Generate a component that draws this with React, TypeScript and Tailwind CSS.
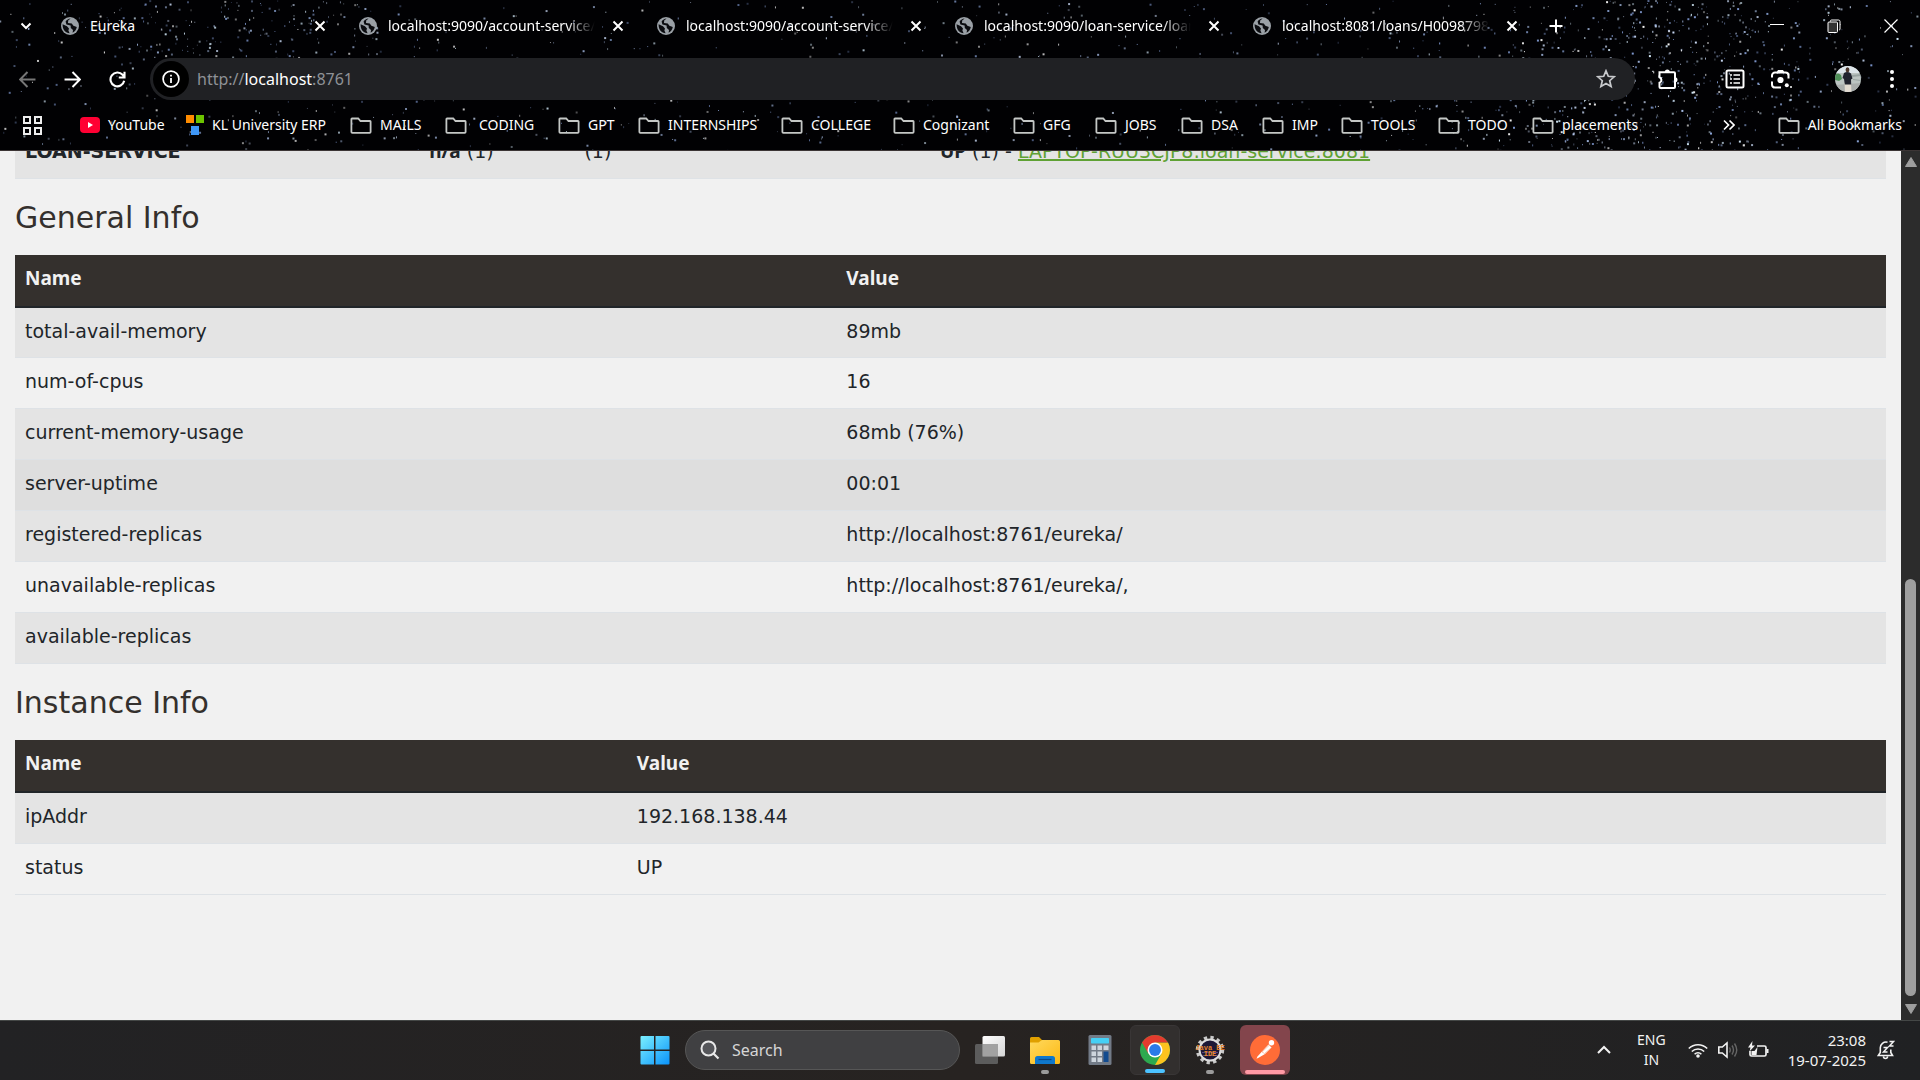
import type { ReactNode } from "react";

/* ---------- star field behind the browser frame ---------- */

type Star = { x: number; y: number; w: number; h: number; c: string; o: number };

function makeStars(): Star[] {
  let seed = 4211;
  const rnd = () => {
    seed = (seed * 1664525 + 1013904223) % 4294967296;
    return seed / 4294967296;
  };
  const colours = ["#ffffff", "#c9d9f5", "#8fa9dc", "#7f98cf", "#a9bfe8", "#d8efff"];
  const stars: Star[] = [];
  const add = (x: number, y: number, bright: number) => {
    const big = rnd() < 0.4;
    stars.push({
      x,
      y,
      w: big ? 2 : 1,
      h: big || rnd() < 0.5 ? 2 : 1,
      c: colours[Math.floor(rnd() * colours.length)],
      o: bright * (0.35 + rnd() * 0.65),
    });
  };
  for (let i = 0; i < 900; i++) add(rnd() * 100, rnd() * 150, 0.8);
  for (let i = 0; i < 640; i++) {
    const y = rnd() * 150;
    const spread = rnd() + rnd() + rnd() - 1.5;
    add(88 - y * 0.025 + spread * 11, y, 1);
  }
  for (let i = 0; i < 150; i++) add(12 + (rnd() + rnd() - 1) * 9, rnd() * 60, 0.9);
  return stars;
}

const STARS = makeStars();

function StarField() {
  return (
    <svg className="pointer-events-none absolute inset-0 h-full w-full" aria-hidden="true">
      {STARS.map((s, i) => (
        <rect key={i} x={`${s.x}%`} y={s.y} width={s.w} height={s.h} fill={s.c} opacity={s.o} />
      ))}
    </svg>
  );
}

/* ---------- small icons ---------- */

function Globe() {
  return (
    <svg viewBox="0 0 20 20" className="h-5 w-5 shrink-0" aria-hidden="true">
      <circle cx="10" cy="10" r="9" fill="#9aa0a6" />
      <path
        d="M2.6 8.2 7 10.2 9 12.4 8.4 14.6 9.6 17.2C5.6 17 2.4 13.6 2.6 8.2ZM10.6 2.6 8.2 4.6 8 7 11.8 7.4 13.4 9.8 16.8 11C16.4 13.6 14.8 15.8 12.6 16.8L13 14 10.8 12 10.6 9.6 6.4 8.4 5.6 5.6C6.8 3.8 8.6 2.8 10.6 2.6Z"
        fill="#0b0c10"
      />
    </svg>
  );
}

function Close() {
  return (
    <svg viewBox="0 0 12 12" className="h-3 w-3" aria-hidden="true">
      <path d="M1.5 1.5l9 9M10.5 1.5l-9 9" stroke="#fff" strokeWidth="2" />
    </svg>
  );
}

function Folder() {
  return (
    <svg viewBox="0 0 22 20" className="h-5 w-[22px] shrink-0" aria-hidden="true">
      <path
        d="M2 3.5h6.2l2.3 2.5H20a.6.6 0 0 1 .6.6V17a.9.9 0 0 1-.9.9H2.3a.9.9 0 0 1-.9-.9V4.1a.6.6 0 0 1 .6-.6z"
        fill="none"
        stroke="#c4c7c5"
        strokeWidth="1.8"
      />
    </svg>
  );
}

function YouTube() {
  return (
    <svg viewBox="0 0 20 18" className="h-[18px] w-5 shrink-0" aria-hidden="true">
      <rect y="1" width="20" height="16" rx="4" fill="#ff0033" />
      <path d="M8 6v6l5-3z" fill="#fff" />
    </svg>
  );
}

function Squares() {
  return (
    <svg viewBox="0 0 18 22" className="h-[22px] w-[18px] shrink-0" aria-hidden="true">
      <path d="M0 1h8v8H0z" fill="#ff8c00" />
      <path d="M10 1h8v8h-8z" fill="#6cc400" />
      <path d="M5 12h8v9H5z" fill="#3f97f6" />
    </svg>
  );
}

/* ---------- browser frame ---------- */

const tabs = [
  "Eureka",
  "localhost:9090/account-service/",
  "localhost:9090/account-service/",
  "localhost:9090/loan-service/loan",
  "localhost:8081/loans/H00987981",
];

function TabStrip() {
  return (
    <div className="relative flex h-[50px] items-center pt-px">
      <button aria-label="Search tabs" className="flex w-[60px] shrink-0 justify-center pr-2">
        <svg viewBox="0 0 12 12" className="h-3 w-3" aria-hidden="true">
          <path d="M1.5 3.5 6 8l4.5-4.5" fill="none" stroke="#fff" strokeWidth="2" />
        </svg>
      </button>
      <div role="tablist" className="flex min-w-0">
        {tabs.map((t, i) => (
          <div key={i} className="flex w-[298px] min-w-0 items-center">
            <div role="tab" aria-selected={i === 0} className="flex min-w-0 items-center gap-[10px]">
              <Globe />
              <span
                className="w-[207px] overflow-hidden text-sm whitespace-nowrap text-white"
                style={i ? { maskImage: "linear-gradient(90deg,#000 86%,transparent)" } : undefined}
              >
                {t}
              </span>
            </div>
            <button aria-label={`Close ${t}`} className="ml-4 p-px">
              <Close />
            </button>
          </div>
        ))}
      </div>
      <button aria-label="New tab" className="-ml-px">
        <svg viewBox="0 0 14 14" className="h-[14px] w-[14px]" aria-hidden="true">
          <path d="M7 .5v13M.5 7h13" stroke="#fff" strokeWidth="2" />
        </svg>
      </button>
      <div className="ml-auto flex items-center gap-[43px] pr-[22px]">
        <button aria-label="Minimize">
          <svg viewBox="0 0 14 14" className="h-[14px] w-[14px]" aria-hidden="true">
            <path d="M0 5.5h14" stroke="#fff" strokeWidth="1" />
          </svg>
        </button>
        <button aria-label="Restore">
          <svg viewBox="0 0 14 14" className="h-[14px] w-[14px]" aria-hidden="true">
            <path d="M3.5 2.5v-.5a1 1 0 0 1 1-1h7a1.500 1.500 0 0 1 1.500 1.500v7.500a1 1 0 0 1-1 1" fill="none" stroke="#fff" />
            <rect x="1" y="3" width="9.500" height="10.500" rx="1" fill="#333" stroke="#fff" />
          </svg>
        </button>
        <button aria-label="Close window">
          <svg viewBox="0 0 14 14" className="h-[14px] w-[14px]" aria-hidden="true">
            <path d="M.5.5l13 13M13.500.5l-13 13" stroke="#fff" strokeWidth="1.2" />
          </svg>
        </button>
      </div>
    </div>
  );
}

function Toolbar() {
  return (
    <div className="relative flex h-[58px] items-center">
      <div className="flex w-[150px] shrink-0 items-center gap-7 pl-[19px]">
        <button aria-label="Back">
          <svg viewBox="0 0 16 16" className="h-[17px] w-[17px]" aria-hidden="true">
            <path d="M15.500 8H1.500M8 1 1 8l7 7" fill="none" stroke="#777" strokeWidth="1.900" />
          </svg>
        </button>
        <button aria-label="Forward">
          <svg viewBox="0 0 16 16" className="h-[17px] w-[17px]" aria-hidden="true">
            <path d="M.5 8h14M8 1l7 7-7 7" fill="none" stroke="#fff" strokeWidth="1.900" />
          </svg>
        </button>
        <button aria-label="Reload">
          <svg viewBox="0 0 16 16" className="h-[17px] w-[17px]" aria-hidden="true">
            <path d="M14.300 9.200A6.500 6.500 0 1 1 12.800 3.600L14.500 5.600M14.600.6v5.500H9.200" fill="none" stroke="#fff" strokeWidth="2" />
          </svg>
        </button>
      </div>
      <div className="flex h-[42px] min-w-0 grow items-center rounded-full bg-[#202124] pr-[19px] pl-[3px]">
        <button
          aria-label="View site information"
          className="flex h-9 w-9 shrink-0 items-center justify-center rounded-full bg-black"
        >
          <svg viewBox="0 0 18 18" className="h-[18px] w-[18px]" aria-hidden="true">
            <circle cx="9" cy="9" r="7.900" fill="none" stroke="#fff" strokeWidth="1.700" />
            <path d="M9 8v5M9 4.800v1.800" stroke="#fff" strokeWidth="1.800" />
          </svg>
        </button>
        <a href="http://localhost:8761" className="ml-2 grow text-base text-[#8e9196]">
          http://<span className="text-white">localhost</span>:8761
        </a>
        <button aria-label="Bookmark this tab">
          <svg viewBox="0 0 20 20" className="h-5 w-5" aria-hidden="true">
            <path
              d="M10 1.800l2.300 5.500 5.900.5-4.500 3.900 1.400 5.800L10 14.400l-5.100 3.100 1.400-5.800L1.800 7.800l5.900-.5z"
              fill="none"
              stroke="#c7c9cc"
              strokeWidth="1.700"
            />
          </svg>
        </button>
      </div>
      <div className="flex w-[285px] shrink-0 items-center pl-[22px]">
        <button aria-label="Extensions" className="mr-[46px]">
          <svg viewBox="0 0 22 22" className="h-[22px] w-[22px]" aria-hidden="true">
            <path
              d="M2.500 4.200H17a1 1 0 0 1 1 1V19a1 1 0 0 1-1 1H3.500a1 1 0 0 1-1-1v-4.200a3 3 0 0 0 0-5.600z"
              fill="none"
              stroke="#fff"
              strokeWidth="2"
            />
            <path d="M7.800 4a2.500 2.500 0 0 1 5 0zM18 9.300a2.500 2.500 0 0 1 0 5z" fill="#fff" />
          </svg>
        </button>
        <button aria-label="Reading list" className="mr-[25px]">
          <svg viewBox="0 0 20 20" className="h-5 w-5" aria-hidden="true">
            <rect x="1.500" y="1.500" width="17" height="17" rx="1.500" fill="none" stroke="#fff" strokeWidth="2" />
            <path d="M5 6h2M5 10h2M5 14h2M8.500 6H15M8.500 10H15M8.500 14H15" stroke="#fff" strokeWidth="1.700" />
          </svg>
        </button>
        <button aria-label="Search with Lens" className="mr-[43px]">
          <svg viewBox="0 0 22 22" className="h-[22px] w-[22px]" aria-hidden="true">
            <path
              d="M2 9.500V7.500a3 3 0 0 1 3-3h10.500a3 3 0 0 1 3 3v3M2 13.500v3a3 3 0 0 0 3 3h6"
              fill="none"
              stroke="#fff"
              strokeWidth="2"
            />
            <path d="M6.500 4.500 8 2h5l1.500 2.500z" fill="#fff" />
            <circle cx="10.500" cy="12" r="3.100" fill="#fff" />
            <circle cx="16.800" cy="17.300" r="2" fill="#fff" />
            <circle cx="21" cy="19" r="1" fill="#fff" />
          </svg>
        </button>
        <button aria-label="Profile" className="mr-7">
          <svg viewBox="0 0 26 26" className="h-[26px] w-[26px]" aria-hidden="true">
            <clipPath id="avatar">
              <circle cx="13" cy="13" r="13" />
            </clipPath>
            <g clipPath="url(#avatar)">
              <path d="M0 0h26v26H0z" fill="#bcc4c2" />
              <path d="M0 0h26v7H0z" fill="#dde5ea" />
              <path d="M0 9q3-3 6 0l1 4-3 2-4-1z" fill="#4f8f58" />
              <path d="M17 9l9-1v2l-9 1zM18 13l8 1v1l-8-1z" fill="#98a3a1" />
              <path d="M0 19l26-2v9H0z" fill="#a9adac" />
              <path d="M9.500 17h6.500l.5 9h-6.500z" fill="#e3dcd2" />
              <path d="M9 7q3.500-2 7 .5l1.500 5-1.500 1 .2 5H9.800L9 13l-1.500-1z" fill="#20222e" />
              <ellipse cx="12.500" cy="3.800" rx="1.900" ry="2.500" fill="#4a352b" />
            </g>
          </svg>
        </button>
        <button aria-label="Menu">
          <svg viewBox="0 0 6 20" className="h-5 w-[6px]" aria-hidden="true">
            <circle cx="3" cy="3" r="2" fill="#fff" />
            <circle cx="3" cy="10" r="2" fill="#fff" />
            <circle cx="3" cy="17" r="2" fill="#fff" />
          </svg>
        </button>
      </div>
    </div>
  );
}

const folders: { label: string; box: string }[] = [
  { label: "MAILS", box: "w-[95px] gap-2" },
  { label: "CODING", box: "w-[113px] gap-3" },
  { label: "GPT", box: "w-20 gap-2" },
  { label: "INTERNSHIPS", box: "w-[143px] gap-2" },
  { label: "COLLEGE", box: "w-28 gap-2" },
  { label: "Cognizant", box: "w-[120px] gap-2" },
  { label: "GFG", box: "w-[82px] gap-2" },
  { label: "JOBS", box: "w-[86px] gap-2" },
  { label: "DSA", box: "w-[81px] gap-2" },
  { label: "IMP", box: "w-[79px] gap-2" },
  { label: "TOOLS", box: "w-[97px] gap-2" },
  { label: "TODO", box: "w-[94px] gap-2" },
  { label: "placements", box: "w-[110px] gap-2" },
];

function BookmarksBar() {
  return (
    <nav aria-label="Bookmarks" className="relative flex h-[42px] items-center pb-2 text-sm text-white">
      <button aria-label="Apps" className="mr-[38px] ml-[23px]">
        <svg viewBox="0 0 19 19" className="h-[19px] w-[19px]" aria-hidden="true">
          <path d="M1 1h6v6H1zM12 1h6v6h-6zM1 12h6v6H1zM12 12h6v6h-6z" fill="none" stroke="#eee" strokeWidth="2" />
        </svg>
      </button>
      <a href="#youtube" className="flex w-[106px] shrink-0 items-center gap-2">
        <YouTube />
        YouTube
      </a>
      <a href="#erp" className="flex w-[164px] shrink-0 items-center gap-2 whitespace-nowrap">
        <Squares />
        KL University ERP
      </a>
      {folders.map((f) => (
        <button key={f.label} className={`flex shrink-0 items-center ${f.box}`}>
          <Folder />
          {f.label}
        </button>
      ))}
      <button aria-label="More bookmarks" className="ml-auto">
        <svg viewBox="0 0 12 12" className="h-3 w-3" aria-hidden="true">
          <path d="M1 1.500 5.500 6 1 10.500M6.500 1.500 11 6l-4.500 4.500" fill="none" stroke="#fff" strokeWidth="1.700" />
        </svg>
      </button>
      <button className="mr-[18px] ml-[43px] flex shrink-0 items-center gap-2">
        <Folder />
        All Bookmarks
      </button>
    </nav>
  );
}

/* ---------- Eureka page ---------- */

const general = [
  ["total-avail-memory", "89mb"],
  ["num-of-cpus", "16"],
  ["current-memory-usage", "68mb (76%)"],
  ["server-uptime", "00:01"],
  ["registered-replicas", "http://localhost:8761/eureka/"],
  ["unavailable-replicas", "http://localhost:8761/eureka/,"],
  ["available-replicas", ""],
];

const instance = [
  ["ipAddr", "192.168.138.44"],
  ["status", "UP"],
];

function InfoTable({
  id,
  title,
  rows,
  firstCol,
  active,
}: {
  id: string;
  title: string;
  rows: string[][];
  firstCol: string;
  active?: number;
}) {
  return (
    <section>
      <h1 id={id} className="pt-5 pb-[18px] text-[30px] leading-[38px] text-[#34302d]">
        {title}
      </h1>
      <table aria-labelledby={id} className="w-full table-fixed border-collapse border-b border-[#dee2e6]">
        <thead>
          <tr className="h-[52px] border-b-2 border-[#212529] bg-[#34302d] text-left align-top font-['Noto_Sans',sans-serif] text-[#f1f1f1]">
            <th className={`px-[10px] pt-2 font-bold ${firstCol}`}>Name</th>
            <th className="px-[10px] pt-2 font-bold">Value</th>
          </tr>
        </thead>
        <tbody>
          {rows.map(([name, value], i) => (
            <tr
              key={name}
              className={`h-[51px] border-t border-[#dee2e6] align-top ${
                i === active ? "bg-[#dedede]" : i % 2 === 0 ? "bg-[#e4e4e4]" : ""
              }`}
            >
              <td className="px-[10px] pt-2">{name}</td>
              <td className="px-[10px] pt-2">{value}</td>
            </tr>
          ))}
        </tbody>
      </table>
    </section>
  );
}

function EurekaPage() {
  return (
    <main className="min-w-0 grow overflow-hidden bg-[#f1f1f1] px-[15px] font-['DejaVu_Sans',sans-serif] text-[19px] leading-[30px] text-[#212529]">
      <table
        aria-label="Instances currently registered with Eureka"
        className="-mt-6 w-full table-fixed border-collapse border-b border-[#dee2e6]"
      >
        <tbody>
          <tr className="h-[51px] bg-[#e4e4e4] align-top">
            <td className="w-[21.6%] px-[10px] pt-[9px] font-bold">LOAN-SERVICE</td>
            <td className="w-[8.3%] px-[10px] pt-[9px]">
              <b className="font-['Noto_Sans',sans-serif]">n/a</b> (1)
            </td>
            <td className="w-[19%] px-[10px] pt-[9px]">(1)</td>
            <td className="px-[10px] pt-[9px]">
              <b className="font-['Noto_Sans',sans-serif]">UP</b> (1) -{" "}
              <a href="#loan-service" className="text-[#5fa134] underline decoration-2">
                LAPTOP-RUU3CJP8:loan-service:8081
              </a>
            </td>
          </tr>
        </tbody>
      </table>
      <InfoTable id="general" title="General Info" rows={general} firstCol="w-[43.9%]" active={3} />
      <InfoTable id="instance" title="Instance Info" rows={instance} firstCol="w-[32.7%]" />
    </main>
  );
}

function Scrollbar() {
  return (
    <div className="flex w-[19px] shrink-0 flex-col items-center bg-[#2c2c2c] py-[6px]" aria-hidden="true">
      <svg viewBox="0 0 12 10" className="h-[10px] w-3 shrink-0">
        <path d="M6 .5 11.500 9.500H.5z" fill="#9f9f9f" stroke="#9f9f9f" strokeLinejoin="round" />
      </svg>
      <div className="min-h-0 grow-[412]" />
      <div className="w-[11px] grow-[418] rounded-full bg-[#9f9f9f]" />
      <div className="h-2 shrink-0" />
      <svg viewBox="0 0 12 10" className="h-[10px] w-3 shrink-0">
        <path d="M.5.5h11L6 9.500z" fill="#9f9f9f" stroke="#9f9f9f" strokeLinejoin="round" />
      </svg>
    </div>
  );
}

/* ---------- taskbar ---------- */

function AppTile({
  label,
  tile = "",
  bar,
  children,
}: {
  label: string;
  tile?: string;
  bar?: string;
  children: ReactNode;
}) {
  return (
    <button aria-label={label} className={`relative flex h-[50px] w-[50px] items-center justify-center rounded-md ${tile}`}>
      {children}
      {bar && <span className={`absolute bottom-px left-1/2 h-1 -translate-x-1/2 rounded-full ${bar}`} />}
    </button>
  );
}

function Windows() {
  return (
    <svg viewBox="0 0 30 30" className="h-[30px] w-[30px]" aria-hidden="true">
      <linearGradient id="win" x1="0" y1="0" x2="1" y2="1">
        <stop offset="0" stopColor="#7bf0ff" />
        <stop offset="1" stopColor="#0a93fa" />
      </linearGradient>
      <path
        d="M1.500 1H14v13.500H.5V2a1 1 0 0 1 1-1zM15.500 1H28.500a1 1 0 0 1 1 1v12.500h-14zM.5 16H14v13.500H1.500a1 1 0 0 1-1-1zM15.500 16h14v12.500a1 1 0 0 1-1 1h-13z"
        fill="url(#win)"
      />
    </svg>
  );
}

function TaskView() {
  return (
    <svg viewBox="0 0 30 30" className="h-[30px] w-[30px]" aria-hidden="true">
      <linearGradient id="tv" x1="0" y1="0" x2="1" y2="1">
        <stop offset="0" stopColor="#fff" />
        <stop offset="1" stopColor="#d5d5d5" />
      </linearGradient>
      <rect x="7.500" y="1" width="22.500" height="20.500" rx="1.500" fill="url(#tv)" />
      <rect x="0" y="9" width="23" height="20" rx="1.500" fill="#666" fillOpacity=".85" />
      <path d="M7.500 9H23v12.500H7.500z" fill="#a2a2a2" />
    </svg>
  );
}

function Explorer() {
  return (
    <svg viewBox="0 0 30 30" className="h-[30px] w-[30px]" aria-hidden="true">
      <linearGradient id="fold" x1="0" y1="0" x2="1" y2="1">
        <stop offset="0" stopColor="#ffd95e" />
        <stop offset="1" stopColor="#fdb913" />
      </linearGradient>
      <path d="M0 3.500A1.500 1.500 0 0 1 1.500 2H9l3.500 3.500V10H0z" fill="#e0a000" />
      <path d="M0 7.500h8.500L12 5h16.500A1.500 1.500 0 0 1 30 6.500v21a1.500 1.500 0 0 1-1.500 1.500h-27A1.500 1.500 0 0 1 0 27.500z" fill="url(#fold)" />
      <path d="M5 29v-5.500A2.500 2.500 0 0 1 7.500 21h15a2.500 2.500 0 0 1 2.500 2.500V29z" fill="#0f78cc" />
      <path d="M8.500 24.500h13" stroke="#0b4a88" strokeWidth="1.200" />
    </svg>
  );
}

function Calculator() {
  return (
    <svg viewBox="0 0 24 30" className="h-[30px] w-6" aria-hidden="true">
      <rect x=".5" width="23" height="30" rx="1.500" fill="#727b87" />
      <rect x="3" y="3" width="18" height="5.500" rx=".8" fill="#45d0f5" />
      <path
        d="M3.500 10.500H8v4.500H3.500zM9.500 10.500H14v4.500H9.500zM15.500 10.500H20.500v4.500h-5zM3.500 16.500H8V21H3.500zM9.500 16.500H14V21H9.500zM3.500 22.500H8V27H3.500zM9.500 22.500H14V27H9.500z"
        fill="#cdd5dd"
      />
      <path d="M15.500 16.500h5V27h-5z" fill="#124b8f" />
    </svg>
  );
}

function Chrome() {
  return (
    <svg viewBox="0 0 48 48" className="h-[30px] w-[30px]" aria-hidden="true">
      <circle cx="24" cy="24" r="24" fill="#2da94f" />
      <path d="M24 12H44.780A24 24 0 0 1 24 48L34.390 30z" fill="#fcc31e" />
      <path d="M3.220 12A24 24 0 0 1 44.780 12H24L13.610 30z" fill="#e33b2e" />
      <circle cx="24" cy="24" r="12" fill="#fff" />
      <circle cx="24" cy="24" r="9.500" fill="#2a7ae9" />
    </svg>
  );
}

function Eclipse() {
  return (
    <svg viewBox="0 0 30 30" className="h-[30px] w-[30px]" aria-hidden="true">
      <circle cx="15" cy="15" r="12.200" fill="none" stroke="#c9c9c9" strokeWidth="4" strokeDasharray="3.200 3.190" />
      <circle cx="15" cy="15" r="10.500" fill="#1d1836" stroke="#dcdcdc" strokeWidth="2" />
      <path d="M7 17.500h16M8 20.500h14" stroke="#55477f" />
      <text x="15" y="14.500" textAnchor="middle" fontSize="7" fontWeight="700" fill="#e8862c" fontFamily="Liberation Mono, monospace">
        Java EE
      </text>
      <text x="15" y="20.500" textAnchor="middle" fontSize="7" fontWeight="700" fill="#e8862c" fontFamily="Liberation Mono, monospace">
        IDE
      </text>
    </svg>
  );
}

function Postman() {
  return (
    <svg viewBox="0 0 30 30" className="h-[30px] w-[30px]" aria-hidden="true">
      <circle cx="15" cy="15" r="15" fill="#ff6c37" />
      <circle cx="21.500" cy="7.800" r="2.700" fill="#fff" />
      <path d="M18.500 9.500 21.500 12.500 15 19 9 22.500 6.500 23.800 7.500 21.500 11.500 17z" fill="#fff" />
      <path d="M19.500 10 12 17l2.500 1.500 7-6" fill="none" stroke="#f7b090" strokeWidth=".7" />
    </svg>
  );
}

function Taskbar() {
  return (
    <footer className="grid h-[60px] shrink-0 grid-cols-[1fr_auto_1fr] items-center border-t border-[#444746] bg-[#202020] bg-gradient-to-r from-[#222224] via-[#272321] to-[#202123] pb-0.5 text-[#f2f2f2]">
      <div />
      <div className="flex items-center gap-[5px]">
        <AppTile label="Start">
          <Windows />
        </AppTile>
        <label className="flex h-10 w-[275px] items-center gap-3 rounded-full border border-[#565656] bg-[#404042] px-[14px]">
          <svg viewBox="0 0 20 20" className="h-5 w-5 shrink-0" aria-hidden="true">
            <circle cx="8.500" cy="8.500" r="7" fill="#55565a" stroke="#e8e8e8" strokeWidth="2" />
            <path d="m13.500 13.500 5 5" stroke="#e8e8e8" strokeWidth="2.200" />
          </svg>
          <input
            type="text"
            aria-label="Search"
            placeholder="Search"
            className="min-w-0 grow bg-transparent text-base outline-none placeholder:text-[#d6d6d6]"
          />
        </label>
        <AppTile label="Task view">
          <TaskView />
        </AppTile>
        <AppTile label="File Explorer" bar="w-2 bg-[#9b9b9b]">
          <Explorer />
        </AppTile>
        <AppTile label="Calculator">
          <Calculator />
        </AppTile>
        <AppTile label="Google Chrome" tile="border border-[#393636] bg-[#322f2e]" bar="w-5 bg-[#4cc2ff]">
          <Chrome />
        </AppTile>
        <AppTile label="Eclipse" bar="w-2 bg-[#9b9b9b]">
          <Eclipse />
        </AppTile>
        <AppTile label="Postman" tile="bg-[#83454c]" bar="w-10 bg-[#ff9aa5]">
          <Postman />
        </AppTile>
      </div>
      <div className="flex items-center justify-end pr-[25px] text-[15px] leading-5">
        <button aria-label="Show hidden icons" className="mr-[26px]">
          <svg viewBox="0 0 14 14" className="h-[14px] w-[14px]" aria-hidden="true">
            <path d="M1 10l6-6 6 6" fill="none" stroke="#f2f2f2" strokeWidth="2" />
          </svg>
        </button>
        <button aria-label="Input language" className="mr-[22px] flex flex-col items-center text-sm leading-5">
          <span>ENG</span>
          <span>IN</span>
        </button>
        <button aria-label="Network, volume and battery" className="mr-[19px] flex items-center gap-[10px]">
          <svg viewBox="0 0 20 16" className="h-4 w-5" aria-hidden="true">
            <path
              d="M.8 6.500a13 13 0 0 1 18.400 0M3.800 9.500a8.800 8.800 0 0 1 12.400 0M6.600 12.200a4.800 4.800 0 0 1 6.800 0"
              fill="none"
              stroke="#f2f2f2"
              strokeWidth="1.600"
            />
            <circle cx="10" cy="14" r="1.800" fill="#f2f2f2" />
          </svg>
          <svg viewBox="0 0 20 18" className="h-[18px] w-5" aria-hidden="true">
            <path d="M.8 6h3.500L9 2v14l-4.700-4H.8z" fill="none" stroke="#f2f2f2" strokeWidth="1.600" />
            <path d="M11.500 6.500q1.500 2.500 0 5M14 4.500q3 4.500 0 9M16.500 2.500q4.500 6.500 0 13" fill="none" stroke="#666" strokeWidth="1.400" />
          </svg>
          <svg viewBox="0 0 21 18" className="h-[18px] w-[21px]" aria-hidden="true">
            <path d="M9 5h7.500a1.500 1.500 0 0 1 1.500 1.500v7a1.500 1.500 0 0 1-1.500 1.500h-13A1.500 1.500 0 0 1 2 13.500V10" fill="none" stroke="#f2f2f2" strokeWidth="1.700" />
            <path d="M3.500 14V10h3l3-4-1 8zM18.500 8h2v4h-2z" fill="#f2f2f2" />
            <path d="M4.500 0 0 6.500h2.500L1.500 10.500 7 4.500H4z" fill="#f2f2f2" />
          </svg>
        </button>
        <button aria-label="Clock" className="mr-[11px] flex flex-col items-end">
          <span>23:08</span>
          <span>19-07-2025</span>
        </button>
        <button aria-label="Notifications">
          <svg viewBox="0 0 18 20" className="h-5 w-[18px]" aria-hidden="true">
            <path
              d="M10.500 2.200A5.800 5.800 0 0 0 3.300 8v4.500L1.300 15.500h14.200l-1.700-3V9.500M6.500 16.500a2 2 0 0 0 4 0"
              fill="none"
              stroke="#f2f2f2"
              strokeWidth="1.600"
            />
            <path d="M6.500 7.500h4l-4 4.500h4M12.500 1.500h4l-4 4.500h4" fill="none" stroke="#f2f2f2" strokeWidth="1.500" />
          </svg>
        </button>
      </div>
    </footer>
  );
}

export default function App() {
  return (
    <div className="flex h-screen flex-col overflow-hidden bg-[#f1f1f1] font-['Noto_Sans',sans-serif]">
      <header className="relative shrink-0 border-b border-[#3c3535] bg-[#010103]">
        <StarField />
        <TabStrip />
        <Toolbar />
        <BookmarksBar />
      </header>
      <div className="flex min-h-0 grow">
        <EurekaPage />
        <Scrollbar />
      </div>
      <Taskbar />
    </div>
  );
}
